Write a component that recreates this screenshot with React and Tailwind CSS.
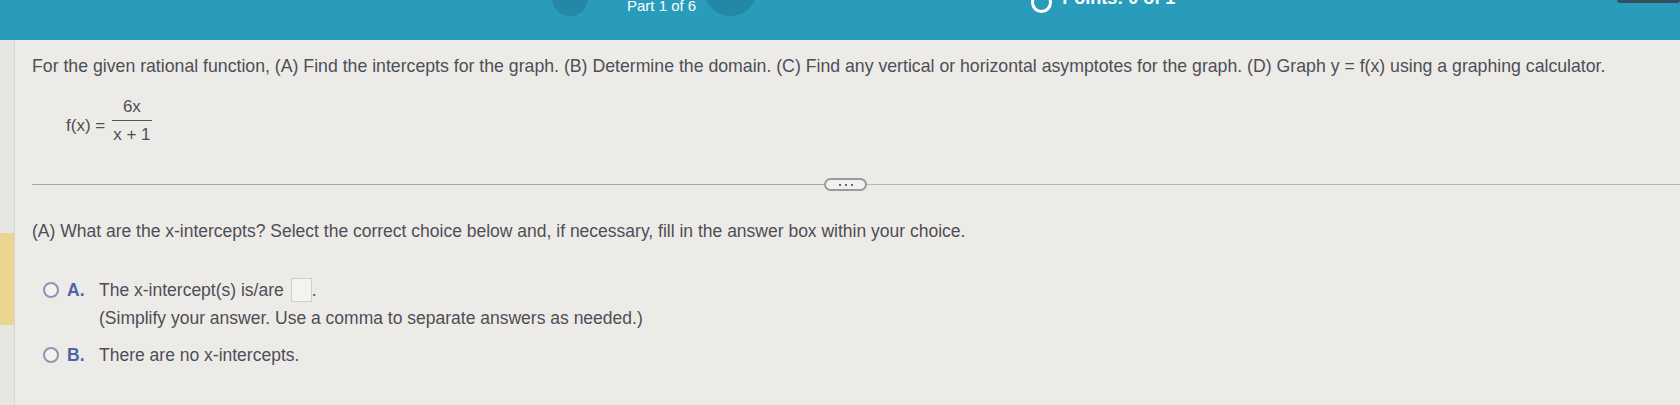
import React from "react";

const font = { fontFamily: '"Liberation Sans", Arial, sans-serif' };

function Radio() {
  return (
    <span className="inline-block h-[16px] w-[16px] shrink-0 rounded-full border-2 border-[#8d94b4] bg-[#f2f2f0]" />
  );
}

function Header() {
  return (
    <div className="flex h-[40px] items-start overflow-hidden bg-[#2a9cbb] text-white">
      <div className="ml-[552px] -mt-[20px] h-[36px] w-[36px] rounded-full bg-[#2487a6]" />
      <div className="ml-[39px] -mt-[3px] text-[15px] leading-[18px]">Part 1 of 6</div>
      <div className="ml-[8px] -mt-[37px] h-[53px] w-[53px] rounded-full bg-[#2487a6]" />
      <div className="ml-[274px] -mt-[8px] h-[21px] w-[21px] rounded-full border-[3px] border-white" />
      <div className="ml-[10px] -mt-[12px] text-[18px] font-bold leading-[20px]">Points: 0 of 1</div>
      <div className="ml-auto h-[3px] w-[63px] rounded-b bg-[#34505e]" />
    </div>
  );
}

export default function App() {
  return (
    <div style={font} className="h-[405px] w-[1680px] overflow-hidden bg-[#ecebe8] text-[#4e4e56]">
      <Header />
      <div className="flex h-[365px]">
        <div className="flex w-[15px] shrink-0 flex-col border-r border-[#d6d5d1] bg-[#e7e6e2]">
          <div className="mt-[193px] h-[92px] bg-[#ead691]" />
        </div>

        <div className="flex-1 pl-[17px]">
          <p className="mt-[15px] text-[17.7px] leading-[22px]">
            For the given rational function, (A) Find the intercepts for the graph. (B) Determine the domain. (C) Find any vertical or horizontal asymptotes for the graph. (D) Graph y = f(x) using a graphing calculator.
          </p>

          <div className="ml-[34px] mt-[19px] flex items-center gap-[5px] text-[17px]">
            <span className="pt-[10px]">f(x) =</span>
            <span className="inline-flex flex-col items-center">
              <span className="px-[3px] leading-[22px]">6x</span>
              <span className="mt-[2px] h-px w-[40px] bg-[#55555c]" />
              <span className="mt-[3px] px-[3px] leading-[22px]">x + 1</span>
            </span>
          </div>

          <div className="mt-[32px] flex items-center">
            <div className="h-px w-[792px] bg-[#a9a9a9]" />
            <div className="flex h-[13px] w-[43px] items-center justify-center gap-[4px] rounded-full border-2 border-[#9a9a9a] bg-[#f0f0ee]">
              <span className="h-[2px] w-[2px] bg-[#666]" />
              <span className="h-[2px] w-[2px] bg-[#666]" />
              <span className="h-[2px] w-[2px] bg-[#666]" />
            </div>
            <div className="h-px flex-1 bg-[#b5b5b5]" />
          </div>

          <p className="mt-[29px] text-[17.5px] leading-[22px]">
            (A) What are the x-intercepts? Select the correct choice below and, if necessary, fill in the answer box within your choice.
          </p>

          <div className="mt-[35px] ml-[11px] flex flex-col gap-[14px] text-[17.5px]">
            <div className="flex items-start">
              <div className="flex h-[26px] items-center">
                <Radio />
              </div>
              <span className="ml-[8px] w-[32px] font-bold leading-[26px] text-[#4d64a6]">A.</span>
              <div className="flex flex-col">
                <div className="flex items-center leading-[26px]">
                  <span>The x-intercept(s) is/are</span>
                  <span className="ml-[7px] inline-block h-[24px] w-[21px] border border-[#d0d0d0] bg-[#f3f3f1]" />
                  <span>.</span>
                </div>
                <div className="mt-[4px] leading-[22px]">
                  (Simplify your answer. Use a comma to separate answers as needed.)
                </div>
              </div>
            </div>
            <div className="flex items-start">
              <div className="flex h-[24px] items-center">
                <Radio />
              </div>
              <span className="ml-[8px] w-[32px] font-bold leading-[24px] text-[#4d64a6]">B.</span>
              <span className="leading-[24px]">There are no x-intercepts.</span>
            </div>
          </div>
        </div>
      </div>
    </div>
  );
}
